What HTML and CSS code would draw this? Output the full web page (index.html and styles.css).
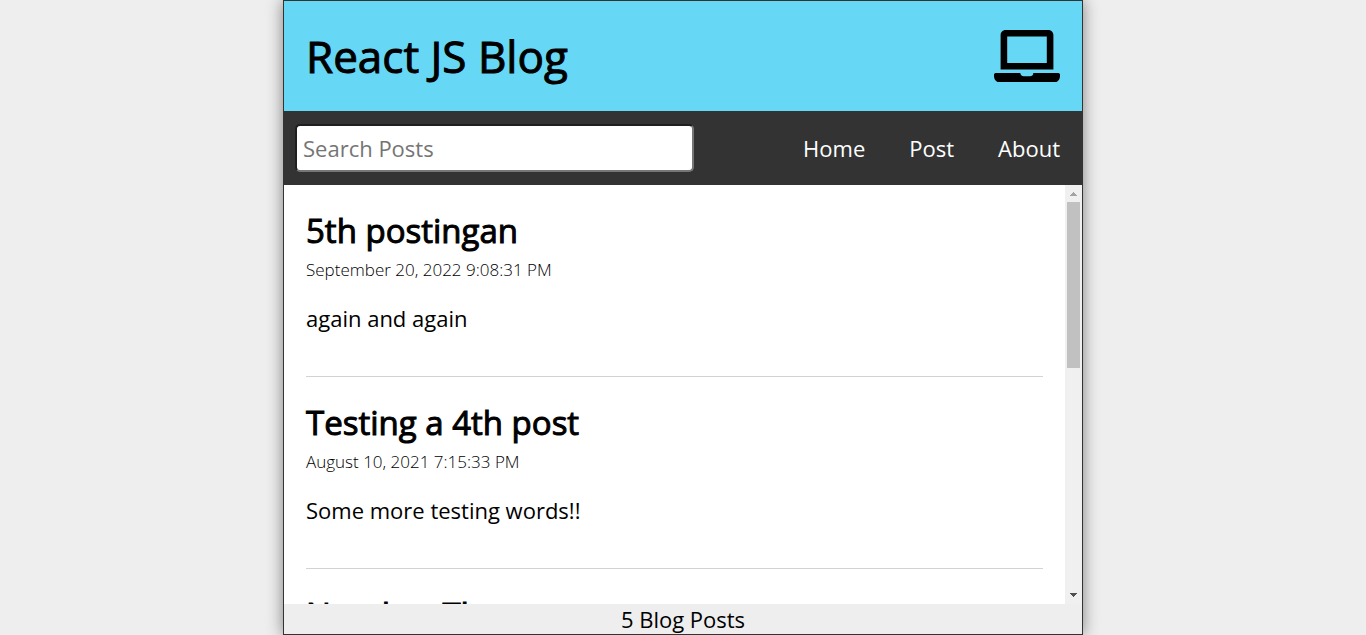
FILE: index.html
```html
<!DOCTYPE html>
<html lang="en">
<head>
<meta charset="utf-8">
<meta name="viewport" content="width=device-width, initial-scale=1">
<title>React JS Blog</title>
<link rel="stylesheet" href="styles.css">
</head>
<body>
<div class="app">
  <header class="header">
    <h1 class="header-title">React JS Blog</h1>
    <svg class="header-icon" viewBox="0 0 640 512" aria-hidden="true"><path d="M624 416H381.54c-.74 19.81-14.71 32-32.74 32H288c-18.69 0-33.02-17.47-32.77-32H16c-8.8 0-16 7.2-16 16v16c0 35.2 28.8 64 64 64h512c35.2 0 64-28.8 64-64v-16c0-8.8-7.2-16-16-16zM576 48c0-26.4-21.6-48-48-48H112C85.6 0 64 21.6 64 48v336h512V48zm-64 272H128V64h384v256z"/></svg>
  </header>
  <nav class="nav">
    <form class="search">
      <label class="visually-hidden" for="search">Search Posts</label>
      <input class="search-input" id="search" type="text" placeholder="Search Posts">
    </form>
    <ul class="nav-list">
      <li><a class="nav-link" href="#home">Home</a></li>
      <li><a class="nav-link" href="#post">Post</a></li>
      <li><a class="nav-link" href="#about">About</a></li>
    </ul>
  </nav>
  <div class="viewport">
    <main class="feed">
      <article class="post">
        <h2 class="post-title">5th postingan</h2>
        <p class="post-date">September 20, 2022 9:08:31 PM</p>
        <p class="post-body">again and again</p>
      </article>
      <article class="post">
        <h2 class="post-title">Testing a 4th post</h2>
        <p class="post-date">August 10, 2021 7:15:33 PM</p>
        <p class="post-body">Some more testing words!!</p>
      </article>
      <article class="post">
        <h2 class="post-title">Number Three</h2>
      </article>
    </main>
    <div class="scrollbar" aria-hidden="true">
      <svg class="scroll-arrow scroll-arrow-off" viewBox="0 0 17 17"><path d="M5 11h7v-1h-1V9h-1V8H9V7H8v1H7v1H6v1H5z"/></svg>
      <div class="scroll-track"><div class="scroll-thumb"></div></div>
      <svg class="scroll-arrow" viewBox="0 0 17 17"><path d="M5 6h7v1h-1v1h-1v1H9v1H8V9H7V8H6V7H5z"/></svg>
    </div>
  </div>
  <footer class="footer">5 Blog Posts</footer>
</div>
</body>
</html>
```
FILE: styles.css
```css
* {
  box-sizing: border-box;
  margin: 0;
  padding: 0;
}

body {
  background: #eee;
  color: #000;
  font: 22px/30px "Open Sans", sans-serif;
}

.app {
  display: flex;
  flex-direction: column;
  max-width: 800px;
  height: 100vh;
  margin: 0 auto;
  border: 1px solid #333;
  box-shadow: 0 0 15px gray;
}

.header {
  display: flex;
  align-items: center;
  justify-content: space-between;
  padding: 25px 22px;
  background: #66d8f5;
}

.header-title {
  font-size: 44px;
  font-weight: 400;
  line-height: 60px;
  -webkit-text-stroke: 1px #000;
}

.header-icon {
  width: 66px;
}

.nav {
  display: flex;
  align-items: center;
  justify-content: space-between;
  padding: 13px 22px 13px 11px;
  background: #333;
}

.search {
  display: flex;
  flex: 0 1 399px;
}

.search-input {
  width: 100%;
  height: 48px;
  padding: 6px;
  border: 2px solid;
  border-color: #1f1f1f #767676 #767676 #1f1f1f;
  border-radius: 5px;
  background: #fff;
  font: inherit;
}

.search-input::placeholder {
  color: #757575;
}

.visually-hidden {
  position: absolute;
  width: 1px;
  height: 1px;
  overflow: hidden;
  clip-path: inset(50%);
}

.nav-list {
  display: flex;
  gap: 44px;
  list-style: none;
}

.nav-link {
  color: #fff;
  text-decoration: none;
}

.viewport {
  display: flex;
  flex: 1;
  min-height: 0;
  background: #fff;
}

.feed {
  flex: 1;
  padding: 0 22px;
  overflow-y: auto;
  scrollbar-width: none;
}

.scrollbar {
  display: flex;
  flex-direction: column;
  width: 17px;
  background: #f0f0f0;
}

.scroll-arrow {
  width: 17px;
  height: 17px;
  fill: #505050;
}

.scroll-arrow-off {
  fill: #a3a3a3;
}

.scroll-track {
  flex: 1;
  padding: 0 2px;
}

.scroll-thumb {
  height: 43%;
  background: #c1c1c1;
}

.post {
  padding: 22px 0 43px;
  border-bottom: 1px solid #d3d3d3;
}

.post-title {
  font-size: 33px;
  font-weight: 400;
  line-height: 48px;
  -webkit-text-stroke: 1px #000;
}

.post-date {
  margin-bottom: 18px;
  font-size: 17px;
  font-weight: 300;
  line-height: 30px;
}

.footer {
  background: #eee;
  text-align: center;
}
```
